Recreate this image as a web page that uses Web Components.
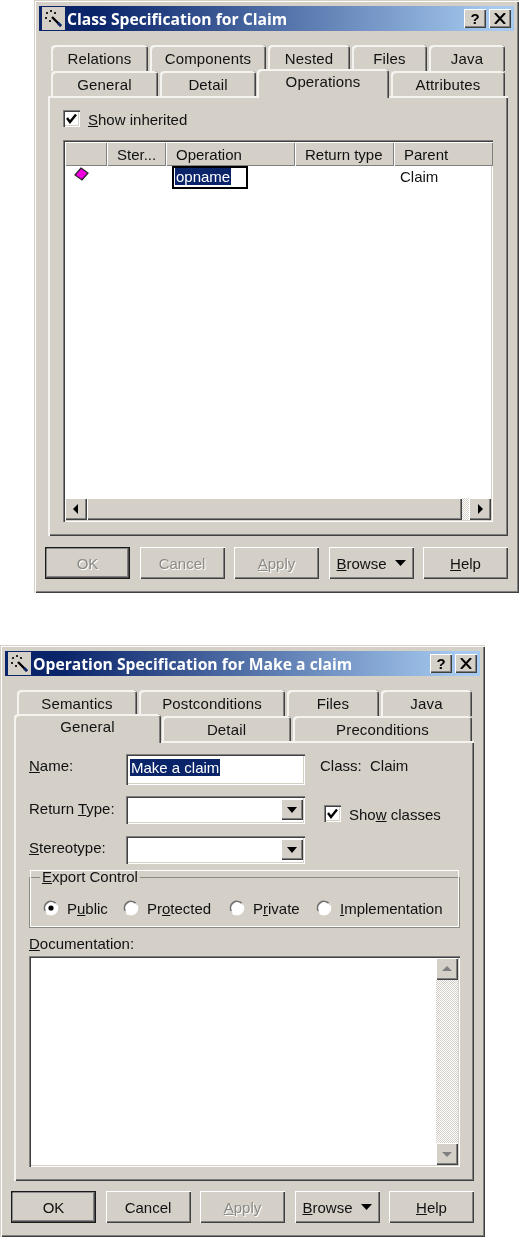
<!DOCTYPE html>
<html>
<head>
<meta charset="utf-8">
<title>Specification dialogs</title>
<style>
  html, body { margin: 0; padding: 0; background: #fff; }
  body { width: 520px; height: 1238px; overflow: hidden; font: 15px "Liberation Sans", Arial, sans-serif; color: #111; }
</style>
</head>
<body>
<win-dialog heading="Class Specification for Claim" style="margin-left:34px;height:593px;--btn-gap:11px">
  <win-tabrow>
    <win-tab style="width:97px">Relations</win-tab>
    <win-tab style="width:116px">Components</win-tab>
    <win-tab style="width:82px">Nested</win-tab>
    <win-tab style="width:75px">Files</win-tab>
    <win-tab style="width:76px">Java</win-tab>
  </win-tabrow>
  <win-tabrow>
    <win-tab style="width:107px">General</win-tab>
    <win-tab style="width:96px">Detail</win-tab>
    <win-tab active style="width:132px;margin:-2px 0 -1px -1px">Operations</win-tab>
    <win-tab style="width:114px">Attributes</win-tab>
  </win-tabrow>
  <win-panel>
    <win-check checked style="margin-bottom:13px"><u>S</u>how inherited</win-check>
    <win-list></win-list>
  </win-panel>
  <win-button slot="buttons" default disabled>OK</win-button>
  <win-button slot="buttons" disabled>Cancel</win-button>
  <win-button slot="buttons" disabled><u>A</u>pply</win-button>
  <win-button slot="buttons" menu><u>B</u>rowse</win-button>
  <win-button slot="buttons"><u>H</u>elp</win-button>
</win-dialog>

<win-dialog heading="Operation Specification for Make a claim" style="margin-top:52px;height:592px;--btn-gap:10px">
  <win-tabrow>
    <win-tab style="width:120px">Semantics</win-tab>
    <win-tab style="width:146px">Postconditions</win-tab>
    <win-tab style="width:92px">Files</win-tab>
    <win-tab style="width:91px">Java</win-tab>
  </win-tabrow>
  <win-tabrow>
    <win-tab active style="width:147px;margin:-2px -1px -1px -3px">General</win-tab>
    <win-tab style="width:129px">Detail</win-tab>
    <win-tab style="width:179px">Preconditions</win-tab>
  </win-tabrow>
  <win-panel style="padding:13px 14px 14px 15px">
    <win-row style="height:31px;margin-bottom:11px">
      <span style="width:97px;padding-bottom:9px"><u>N</u>ame:</span>
      <win-field style="height:31px"><span style="background:#0a246a;color:#fff;padding:0 1px">Make a claim</span></win-field>
      <span style="margin-left:15px;padding-bottom:9px">Class:&nbsp; Claim</span>
    </win-row>
    <win-row style="height:28px;margin-bottom:12px">
      <span style="width:97px;padding-bottom:4px">Return <u>T</u>ype:</span>
      <win-field combo style="height:28px"></win-field>
      <win-check checked style="margin-left:19px;padding-top:6px"><span>Sho<u>w</u> classes</span></win-check>
    </win-row>
    <win-row style="height:28px;margin-bottom:5px">
      <span style="width:97px;padding-bottom:6px"><u>S</u>tereotype:</span>
      <win-field combo style="height:28px"></win-field>
    </win-row>
    <win-group legend="Export Control">
      <win-radio checked style="width:80px">P<u>u</u>blic</win-radio>
      <win-radio style="width:106px">Pr<u>o</u>tected</win-radio>
      <win-radio style="width:87px">P<u>r</u>ivate</win-radio>
      <win-radio><u>I</u>mplementation</win-radio>
    </win-group>
    <div style="height:28px;line-height:32px"><u>D</u>ocumentation:</div>
    <win-memo></win-memo>
  </win-panel>
  <win-button slot="buttons" default>OK</win-button>
  <win-button slot="buttons">Cancel</win-button>
  <win-button slot="buttons" disabled><u>A</u>pply</win-button>
  <win-button slot="buttons" menu><u>B</u>rowse</win-button>
  <win-button slot="buttons"><u>H</u>elp</win-button>
</win-dialog>

<script>
const RAISED = "inset 1px 1px #fff, inset -1px -1px #404040, inset -2px -2px #808080";
const SUNKEN = "inset 1px 1px #808080, inset 2px 2px #404040, inset -1px -1px #fff, inset -2px -2px #d4d0c8";

class WinDialog extends HTMLElement {
  constructor() {
    super();
    this.shadowDOM = this.attachShadow({ mode: "open" });
  }

  connectedCallback() {
    this.shadowDOM.innerHTML = `
      <style>
        :host {
          display: flex; flex-direction: column; box-sizing: border-box;
          width: 485px; padding: 6px 5px 14px;
          background: #d4d0c8; filter: blur(0.4px);
          box-shadow: inset 1px 1px #d4d0c8, inset 2px 2px #fff, inset -1px -1px #404040, inset -2px -2px #808080;
        }
        .title {
          height: 25px; flex: none; display: flex; align-items: center; gap: 2px;
          background: linear-gradient(90deg, #0a246a 12%, #a6caf0 96%);
          color: #fff; font: bold 15.7px "Open Sans", sans-serif; padding: 0 3px;
        }
        .icon { width: 23px; height: 23px; flex: none; background: #d4d0c8; }
        .text { flex: 1; white-space: nowrap; }
        .cap {
          width: 22px; height: 19px; margin-left: 1px; background: #d4d0c8; box-shadow: ${RAISED};
          display: flex; align-items: center; justify-content: center;
        }
        .body { flex: 1; min-height: 0; margin: 14px 6px 0 9px; display: flex; flex-direction: column; }
        ::slotted(win-panel) { flex: 1; min-height: 0; }
        .buttons {
          flex: none; display: flex; justify-content: space-between;
          margin: var(--btn-gap) 6px 0 6px;
        }
      </style>
      <div class="title">
        <svg class="icon" viewBox="0 0 23 23">
          <path d="M10 10 L19 19" stroke="#000" stroke-width="2.4"/>
          <path d="M16 16 L19 19" stroke="#0a246a" stroke-width="2.6"/>
          <g fill="#222"><rect x="4" y="5" width="2" height="2"/><rect x="8" y="3" width="2" height="2"/><rect x="12" y="5" width="2" height="2"/><rect x="3" y="10" width="2" height="2"/><rect x="7" y="13" width="2" height="2"/></g>
        </svg>
        <span class="text"></span>
        <span class="cap"><span style="font:bold 15px 'Liberation Sans',sans-serif;color:#000">?</span></span>
        <span class="cap"><svg width="12" height="11" viewBox="0 0 12 11"><path d="M1 0 L11 11 M11 0 L1 11" stroke="#000" stroke-width="2"/></svg></span>
      </div>
      <div class="body"><slot></slot></div>
      <div class="buttons"><slot name="buttons"></slot></div>`;
    this.shadowDOM.querySelector(".text").textContent = this.getAttribute("heading");
  }
}

class WinTabRow extends HTMLElement {
  constructor() {
    super();
    this.shadowDOM = this.attachShadow({ mode: "open" });
  }

  connectedCallback() {
    this.shadowDOM.innerHTML = `
      <style>
        :host { display: flex; gap: 2px; height: 25.5px; padding-left: 3px; flex: none; }
      </style>
      <slot></slot>`;
  }
}

class WinTab extends HTMLElement {
  constructor() {
    super();
    this.shadowDOM = this.attachShadow({ mode: "open" });
  }

  connectedCallback() {
    this.shadowDOM.innerHTML = `
      <style>
        :host {
          display: flex; align-items: center; justify-content: center; box-sizing: border-box;
          flex: none; border-radius: 4px 4px 0 0; background: #d4d0c8; padding-top: 2px;
          box-shadow: inset 2px 2px #f4f3ef, inset -1px 0 #404040, inset -2px 0 #808080;
          letter-spacing: 0.15px;
        }
        :host([active]) {
          position: relative; z-index: 1;
          padding: 0 0 3px; height: 29px;
        }
      </style>
      <slot></slot>`;
  }
}

class WinPanel extends HTMLElement {
  constructor() {
    super();
    this.shadowDOM = this.attachShadow({ mode: "open" });
  }

  connectedCallback() {
    this.shadowDOM.innerHTML = `
      <style>
        :host {
          display: flex; flex-direction: column; box-sizing: border-box;
          padding: 14px 15px 14px 15px; background: #d4d0c8;
          box-shadow: inset 2px 2px #f4f3ef, inset -1px -1px #404040, inset -2px -2px #808080;
        }
      </style>
      <slot></slot>`;
  }
}

class WinRow extends HTMLElement {
  constructor() {
    super();
    this.shadowDOM = this.attachShadow({ mode: "open" });
  }

  connectedCallback() {
    this.shadowDOM.innerHTML = `
      <style>
        :host { display: flex; align-items: center; flex: none; }
        ::slotted(span) { display: inline-block; flex: none; }
      </style>
      <slot></slot>`;
  }
}

class WinField extends HTMLElement {
  constructor() {
    super();
    this.shadowDOM = this.attachShadow({ mode: "open" });
  }

  connectedCallback() {
    const arrow = this.hasAttribute("combo")
      ? `<span class="drop"><svg width="10" height="6" viewBox="0 0 10 6"><path d="M0 0H10L5 6Z" fill="#000"/></svg></span>`
      : "";
    this.shadowDOM.innerHTML = `
      <style>
        :host {
          display: flex; box-sizing: border-box; width: 179px; flex: none; background: #fff;
          box-shadow: ${SUNKEN}; padding: 3px 2px 4px 4px; align-items: flex-start; line-height: 18px;
        }
        .text { flex: 1; padding-top: 2px; }
        .drop {
          width: 22px; align-self: stretch; background: #d4d0c8; box-shadow: ${RAISED};
          display: flex; align-items: center; justify-content: center;
        }
      </style>
      <span class="text"><slot></slot></span>${arrow}`;
  }
}

class WinCheck extends HTMLElement {
  constructor() {
    super();
    this.shadowDOM = this.attachShadow({ mode: "open" });
  }

  connectedCallback() {
    const tick = this.hasAttribute("checked")
      ? `<svg width="17" height="17" viewBox="0 0 17 17"><path d="M4 8 L7 12 L13 4.5" fill="none" stroke="#000" stroke-width="2.4"/></svg>`
      : "";
    this.shadowDOM.innerHTML = `
      <style>
        :host { display: flex; align-items: center; gap: 8px; flex: none; }
        .box { width: 17px; height: 17px; background: #fff; box-shadow: ${SUNKEN}; flex: none; display: block; }
        .label { position: relative; top: 1px; }
        svg { display: block; }
      </style>
      <span class="box">${tick}</span><span class="label"><slot></slot></span>`;
  }
}

class WinRadio extends HTMLElement {
  constructor() {
    super();
    this.shadowDOM = this.attachShadow({ mode: "open" });
  }

  connectedCallback() {
    const dot = this.hasAttribute("checked") ? `<circle cx="8" cy="8" r="2.6" fill="#000"/>` : "";
    this.shadowDOM.innerHTML = `
      <style>
        :host { display: flex; align-items: center; gap: 8px; flex: none; }
        svg { flex: none; display: block; }
      </style>
      <svg width="16" height="16" viewBox="0 0 16 16">
        <circle cx="8" cy="8" r="6.5" fill="#fff"/>
        <path d="M2.2 11 A6.6 6.6 0 0 1 12.6 3.2" fill="none" stroke="#707070" stroke-width="1.6"/>
        <path d="M13.8 5 A6.6 6.6 0 0 1 3.4 12.8" fill="none" stroke="#fff" stroke-width="1.6"/>
        ${dot}
      </svg>
      <span><slot></slot></span>`;
  }
}

class WinGroup extends HTMLElement {
  constructor() {
    super();
    this.shadowDOM = this.attachShadow({ mode: "open" });
  }

  connectedCallback() {
    this.shadowDOM.innerHTML = `
      <style>
        :host { display: block; flex: none; }
        fieldset {
          margin: 0; box-sizing: border-box; height: 59px; padding: 4px 0 0 13px;
          border: 1px solid #8c8a85; outline: 1px solid #fff; outline-offset: -2px;
          display: flex; align-items: center;
        }
        .row { display: flex; align-items: center; }
        legend { margin-left: -3px; padding: 0 2px; line-height: 16px; }
        u { text-decoration: underline; }
      </style>
      <fieldset>
        <legend><u>E</u>xport Control</legend>
        <div class="row"><slot></slot></div>
      </fieldset>`;
  }
}

class WinScrollbar extends HTMLElement {
  constructor() {
    super();
    this.shadowDOM = this.attachShadow({ mode: "open" });
  }

  connectedCallback() {
    const vertical = this.getAttribute("dir") === "v";
    const arrow = (points, fill) => `<svg width="10" height="10" viewBox="0 0 10 10"><polygon points="${points}" fill="${fill}"/></svg>`;
    const first = vertical ? arrow("5,2 0,7 10,7", "#808080") : arrow("7,0 2,5 7,10", "#000");
    const last = vertical ? arrow("0,3 10,3 5,8", "#808080") : arrow("3,0 8,5 3,10", "#000");
    const middle = vertical
      ? `<span class="track"></span>`
      : `<span class="thumb"></span><span class="track" style="flex:none;width:7px"></span>`;
    this.shadowDOM.innerHTML = `
      <style>
        :host { display: flex; flex: none; flex-direction: ${vertical ? "column" : "row"}; ${vertical ? "width:22px" : "height:22px"}; }
        .btn {
          flex: none; width: 22px; height: 22px; background: #d4d0c8; box-shadow: ${RAISED};
          display: flex; align-items: center; justify-content: center;
        }
        .thumb { flex: 1; background: #d4d0c8; box-shadow: ${RAISED}; }
        .track { flex: 1; background: repeating-conic-gradient(#fff 0 25%, #d4d0c8 0 50%) 0 0 / 2px 2px; }
      </style>
      <span class="btn">${first}</span>${middle}<span class="btn">${last}</span>`;
  }
}

class WinList extends HTMLElement {
  constructor() {
    super();
    this.shadowDOM = this.attachShadow({ mode: "open" });
  }

  connectedCallback() {
    this.shadowDOM.innerHTML = `
      <style>
        :host {
          flex: 1; min-height: 0; display: flex; flex-direction: column; box-sizing: border-box;
          background: #fff; box-shadow: ${SUNKEN}; padding: 2px;
        }
        .cols { display: grid; grid-template-columns: 42px 59px 129px 99px 99px; flex: none; }
        .head span {
          height: 24px; line-height: 26px; padding-left: 10px; box-sizing: border-box;
          background: #d4d0c8; box-shadow: inset 1px 1px #fff, inset -1px -1px #808080; white-space: nowrap;
        }
        .rows { flex: 1; min-height: 0; background: #fff; }
        .row { height: 23px; line-height: 21px; align-items: start; }
        .edit {
          display: block; box-sizing: border-box; width: 76px; height: 23px; margin-left: 6px;
          border: 2px solid #000; background: #fff; line-height: 18px; padding-left: 1px;
        }
        .sel { background: #0a246a; color: #fff; padding: 0 1px; }
        svg { display: block; margin: 1px 0 0 9px; }
        .claim { padding-left: 6px; }
      </style>
      <div class="cols head"><span></span><span>Ster...</span><span>Operation</span><span>Return type</span><span>Parent</span></div>
      <div class="rows">
        <div class="cols row">
          <svg width="15" height="15" viewBox="0 0 15 15"><polygon points="7,1 14,6 8,13 1,8" fill="#f000e0" stroke="#222" stroke-width="1.2"/></svg>
          <span></span>
          <span><span class="edit"><span class="sel">opname</span></span></span>
          <span></span>
          <span class="claim">Claim</span>
        </div>
      </div>
      <win-scrollbar dir="h"></win-scrollbar>`;
  }
}

class WinMemo extends HTMLElement {
  constructor() {
    super();
    this.shadowDOM = this.attachShadow({ mode: "open" });
  }

  connectedCallback() {
    this.shadowDOM.innerHTML = `
      <style>
        :host {
          flex: 1; min-height: 0; display: flex; justify-content: flex-end; box-sizing: border-box;
          background: #fff; box-shadow: ${SUNKEN}; padding: 2px;
        }
      </style>
      <win-scrollbar dir="v"></win-scrollbar>`;
  }
}

class WinButton extends HTMLElement {
  constructor() {
    super();
    this.shadowDOM = this.attachShadow({ mode: "open" });
  }

  connectedCallback() {
    const menu = this.hasAttribute("menu")
      ? `<svg width="11" height="6" viewBox="0 0 11 6" style="margin-left:8px"><path d="M0 0H11L5.5 6Z" fill="#000"/></svg>`
      : "";
    this.shadowDOM.innerHTML = `
      <style>
        :host {
          display: flex; align-items: center; justify-content: center; box-sizing: border-box;
          width: 85px; height: 32px; flex: none; background: #d4d0c8; box-shadow: ${RAISED};
        }
        :host([default]) {
          box-shadow: inset 0 0 0 1.5px #1a1a1a, inset 2px 2px #fff, inset -3px -3px #808080;
        }
        :host([disabled]) { color: #8c8a85; text-shadow: 1px 1px #fff; }
      </style>
      <span><slot></slot></span>${menu}`;
  }
}

customElements.define("win-dialog", WinDialog);
customElements.define("win-tabrow", WinTabRow);
customElements.define("win-tab", WinTab);
customElements.define("win-panel", WinPanel);
customElements.define("win-row", WinRow);
customElements.define("win-field", WinField);
customElements.define("win-check", WinCheck);
customElements.define("win-radio", WinRadio);
customElements.define("win-group", WinGroup);
customElements.define("win-scrollbar", WinScrollbar);
customElements.define("win-list", WinList);
customElements.define("win-memo", WinMemo);
customElements.define("win-button", WinButton);
</script>
</body>
</html>
